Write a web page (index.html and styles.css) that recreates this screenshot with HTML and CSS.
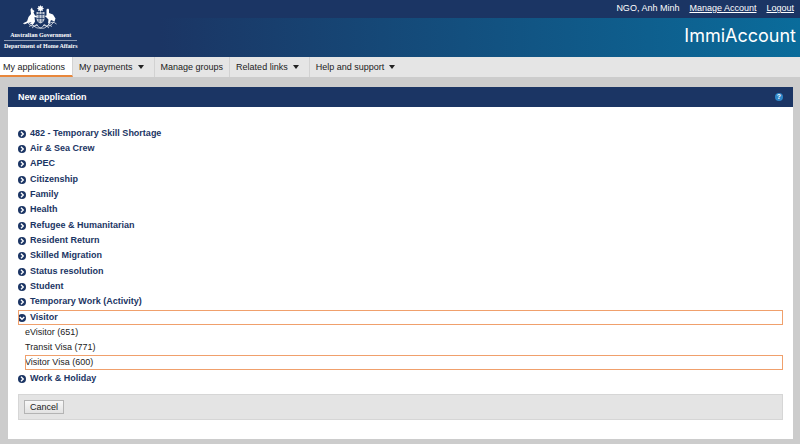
FILE: index.html
```
<!DOCTYPE html>
<html lang="en">
<head>
<meta charset="utf-8">
<title>ImmiAccount</title>
<link rel="stylesheet" href="styles.css">
</head>
<body>
<svg class="sprite" aria-hidden="true">
  <symbol id="closed" viewBox="0 0 16 16"><circle cx="8" cy="8" r="8" fill="#1b3564"/><path d="M6 3.5 10.5 8 6 12.5" fill="none" stroke="#fff" stroke-width="2.8"/></symbol>
  <symbol id="opened" viewBox="0 0 16 16"><circle cx="8" cy="8" r="8" fill="#1b3564"/><path d="M3.5 6 8 10.5 12.5 6" fill="none" stroke="#fff" stroke-width="2.8"/></symbol>
</svg>
<header class="banner">
  <div class="crest">
    <svg class="arms" viewBox="0 0 70 50" aria-hidden="true">
      <g fill="#fff">
        <path d="m35 0 1.5 3 3.500-1-1 3 3 2-3 2 1 3-3.500-1-1.500 3-1.500-3-3.500 1 1-3-3-2 3-2-1-3 3.500 1z"/>
        <path d="M27 14h16v14q-1 6-8 9-7-3-8-9z" opacity=".75"/>
        <path d="M15 9 18 5l1 4 4 3-2 3 3 6 4 1-1 3-4-1 1 9-3 5h-7l3-4-6 1-7 3-5-1 9-4 3-9 5-6z"/>
        <path d="M47 9l3-2 2 2v7l8 3 5 8-2 6-7-3-3 7h-3l1-8-5-5-3-2 4-1z"/>
      </g>
      <path d="M27 19h16M27 27h16M32 14v20M38 14v20" stroke="#1b3564" stroke-width="1.500"/>
      <path d="M3 38q9-7 17 2t15 5q7 5 15-5t17-2M8 33q8 14 22 7M62 33q-8 14-22 7M18 46l9-7 8 9 8-9 9 7M12 43l8-4M58 43l-8-4" fill="none" stroke="#fff" stroke-width="1.800" opacity=".75"/>
    </svg>
    <span class="gov">Australian Government</span>
    <span class="dept">Department of Home Affairs</span>
  </div>
  <div class="user"><span>NGO, Anh Minh</span><a href="#">Manage Account</a><a href="#">Logout</a></div>
  <div class="brand">ImmiAccount</div>
</header>
<nav class="menu">
  <a class="current" href="#">My applications</a>
  <a class="drop" href="#">My payments</a>
  <a href="#">Manage groups</a>
  <a class="drop" href="#">Related links</a>
  <a class="drop" href="#">Help and support</a>
</nav>
<main class="panel">
  <div class="title">
    <h1>New application</h1>
    <button class="help" aria-label="Help">?</button>
  </div>
  <div class="content">
    <ul class="tree">
      <li><a href="#"><svg><use href="#closed"/></svg>482 - Temporary Skill Shortage</a></li>
      <li><a href="#"><svg><use href="#closed"/></svg>Air &amp; Sea Crew</a></li>
      <li><a href="#"><svg><use href="#closed"/></svg>APEC</a></li>
      <li><a href="#"><svg><use href="#closed"/></svg>Citizenship</a></li>
      <li><a href="#"><svg><use href="#closed"/></svg>Family</a></li>
      <li><a href="#"><svg><use href="#closed"/></svg>Health</a></li>
      <li><a href="#"><svg><use href="#closed"/></svg>Refugee &amp; Humanitarian</a></li>
      <li><a href="#"><svg><use href="#closed"/></svg>Resident Return</a></li>
      <li><a href="#"><svg><use href="#closed"/></svg>Skilled Migration</a></li>
      <li><a href="#"><svg><use href="#closed"/></svg>Status resolution</a></li>
      <li><a href="#"><svg><use href="#closed"/></svg>Student</a></li>
      <li><a href="#"><svg><use href="#closed"/></svg>Temporary Work (Activity)</a></li>
      <li><a class="marked" href="#"><svg><use href="#opened"/></svg>Visitor</a>
        <ul class="sub">
          <li><a href="#">eVisitor (651)</a></li>
          <li><a href="#">Transit Visa (771)</a></li>
          <li><a class="marked" href="#">Visitor Visa (600)</a></li>
        </ul>
      </li>
      <li><a href="#"><svg><use href="#closed"/></svg>Work &amp; Holiday</a></li>
    </ul>
    <div class="actions"><button class="cancel">Cancel</button></div>
  </div>
</main>
</body>
</html>
```
FILE: styles.css
```
* { box-sizing: border-box; }
body {
  margin: 0;
  background: #ccc;
  color: #222;
  font: 9px/15px "Liberation Sans", Arial, sans-serif;
}
.sprite { position: absolute; width: 0; height: 0; }
ul { margin: 0; padding: 0; list-style: none; }
a { color: inherit; text-decoration: none; }

.banner {
  display: grid;
  grid-template-columns: auto 1fr;
  grid-template-rows: 18px 39px;
  color: #fff;
  background: linear-gradient(#1b3564, #1b3564) top / 100% 18px no-repeat,
    linear-gradient(90deg, #1b3564 20%, #0a6c9b);
}
.crest {
  grid-row: 1 / 3;
  display: flex;
  flex-direction: column;
  align-items: center;
  padding: 5px 4px 0;
  font: bold 6px/10px "Liberation Serif", "Times New Roman", serif;
}
.arms { width: 35px; height: 25px; }
.dept { border-top: 1px solid #8d9ab2; }
.user {
  display: flex;
  justify-content: flex-end;
  gap: 10px;
  padding: 1px 6px 0 0;
}
.user a { text-decoration: underline; }
.brand {
  padding-right: 4px;
  text-align: right;
  font: 18px/36px Inter, sans-serif;
}

.menu { display: flex; background: #e5e5e5; }
.menu a {
  padding: 3px 6px 2px;
  border-right: 1px solid #d2d2d2;
}
.menu a:last-child { border-right: 0; }
.menu .current {
  padding: 3px 7px 0 3px;
  background: #fff;
  border-bottom: 2px solid #e8873c;
}
.drop::after {
  content: "";
  display: inline-block;
  margin: 0 4px 1px 5px;
  border: 3px solid transparent;
  border-top: 4px solid #222;
  border-bottom: 0;
}

.panel {
  margin: 10px 7px 5px 8px;
  background: #fff;
}
.title {
  display: flex;
  align-items: center;
  justify-content: space-between;
  height: 20px;
  padding: 0 10px;
  background: #1b3564;
  color: #fff;
}
.title h1 { margin: 0; font-size: 9px; }
.help {
  width: 8px;
  height: 8px;
  padding: 0;
  border: 0;
  border-radius: 50%;
  background: #2e86c8;
  color: #fff;
  font: bold 7px/8px "Liberation Sans", Arial, sans-serif;
}
.content { padding: 19px 10px; }
.tree > li > a {
  display: flex;
  align-items: center;
  gap: 4px;
  color: #1b3564;
  font-weight: bold;
}
.tree li:nth-child(3n) { margin-bottom: 1px; }
.tree svg { width: 8px; height: 8px; }
.sub { padding-left: 7px; }
.sub a { display: block; }
.marked { outline: 1px solid #f0a06c; outline-offset: -1px; }
.actions {
  margin-top: 8px;
  padding: 5px;
  background: #e4e4e4;
  border: 1px solid #d6d6d6;
}
.cancel {
  display: block;
  height: 14px;
  padding: 0 5px;
  border: 1px solid #b4b4b4;
  background: linear-gradient(#f8f8f8, #e2e2e2);
  color: #222;
  font: 9px/12px "Liberation Sans", Arial, sans-serif;
}
```
